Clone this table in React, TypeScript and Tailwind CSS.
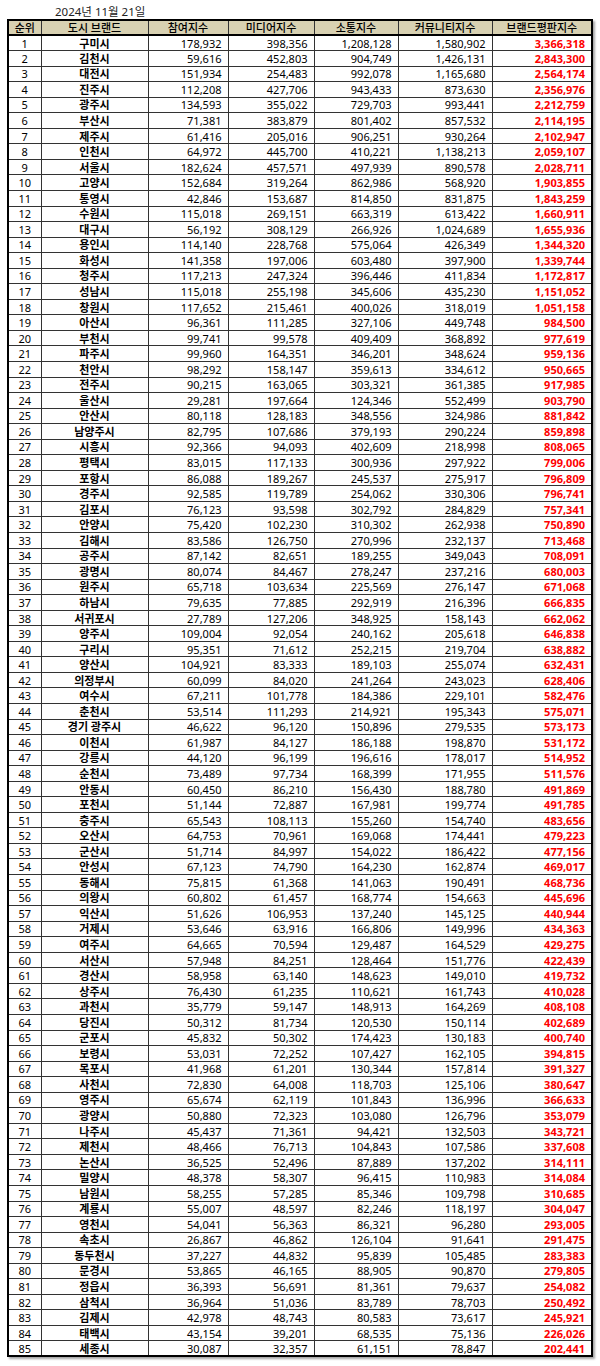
type Row = [string, number, number, number, number, number];

const rows: Row[] = [
  ["구미시", 178932, 398356, 1208128, 1580902, 3366318],
  ["김천시", 59616, 452803, 904749, 1426131, 2843300],
  ["대전시", 151934, 254483, 992078, 1165680, 2564174],
  ["진주시", 112208, 427706, 943433, 873630, 2356976],
  ["광주시", 134593, 355022, 729703, 993441, 2212759],
  ["부산시", 71381, 383879, 801402, 857532, 2114195],
  ["제주시", 61416, 205016, 906251, 930264, 2102947],
  ["인천시", 64972, 445700, 410221, 1138213, 2059107],
  ["서울시", 182624, 457571, 497939, 890578, 2028711],
  ["고양시", 152684, 319264, 862986, 568920, 1903855],
  ["통영시", 42846, 153687, 814850, 831875, 1843259],
  ["수원시", 115018, 269151, 663319, 613422, 1660911],
  ["대구시", 56192, 308129, 266926, 1024689, 1655936],
  ["용인시", 114140, 228768, 575064, 426349, 1344320],
  ["화성시", 141358, 197006, 603480, 397900, 1339744],
  ["청주시", 117213, 247324, 396446, 411834, 1172817],
  ["성남시", 115018, 255198, 345606, 435230, 1151052],
  ["창원시", 117652, 215461, 400026, 318019, 1051158],
  ["아산시", 96361, 111285, 327106, 449748, 984500],
  ["부천시", 99741, 99578, 409409, 368892, 977619],
  ["파주시", 99960, 164351, 346201, 348624, 959136],
  ["천안시", 98292, 158147, 359613, 334612, 950665],
  ["전주시", 90215, 163065, 303321, 361385, 917985],
  ["울산시", 29281, 197664, 124346, 552499, 903790],
  ["안산시", 80118, 128183, 348556, 324986, 881842],
  ["남양주시", 82795, 107686, 379193, 290224, 859898],
  ["시흥시", 92366, 94093, 402609, 218998, 808065],
  ["평택시", 83015, 117133, 300936, 297922, 799006],
  ["포항시", 86088, 189267, 245537, 275917, 796809],
  ["경주시", 92585, 119789, 254062, 330306, 796741],
  ["김포시", 76123, 93598, 302792, 284829, 757341],
  ["안양시", 75420, 102230, 310302, 262938, 750890],
  ["김해시", 83586, 126750, 270996, 232137, 713468],
  ["공주시", 87142, 82651, 189255, 349043, 708091],
  ["광명시", 80074, 84467, 278247, 237216, 680003],
  ["원주시", 65718, 103634, 225569, 276147, 671068],
  ["하남시", 79635, 77885, 292919, 216396, 666835],
  ["서귀포시", 27789, 127206, 348925, 158143, 662062],
  ["양주시", 109004, 92054, 240162, 205618, 646838],
  ["구리시", 95351, 71612, 252215, 219704, 638882],
  ["양산시", 104921, 83333, 189103, 255074, 632431],
  ["의정부시", 60099, 84020, 241264, 243023, 628406],
  ["여수시", 67211, 101778, 184386, 229101, 582476],
  ["춘천시", 53514, 111293, 214921, 195343, 575071],
  ["경기 광주시", 46622, 96120, 150896, 279535, 573173],
  ["이천시", 61987, 84127, 186188, 198870, 531172],
  ["강릉시", 44120, 96199, 196616, 178017, 514952],
  ["순천시", 73489, 97734, 168399, 171955, 511576],
  ["안동시", 60450, 86210, 156430, 188780, 491869],
  ["포천시", 51144, 72887, 167981, 199774, 491785],
  ["충주시", 65543, 108113, 155260, 154740, 483656],
  ["오산시", 64753, 70961, 169068, 174441, 479223],
  ["군산시", 51714, 84997, 154022, 186422, 477156],
  ["안성시", 67123, 74790, 164230, 162874, 469017],
  ["동해시", 75815, 61368, 141063, 190491, 468736],
  ["의왕시", 60802, 61457, 168774, 154663, 445696],
  ["익산시", 51626, 106953, 137240, 145125, 440944],
  ["거제시", 53646, 63916, 166806, 149996, 434363],
  ["여주시", 64665, 70594, 129487, 164529, 429275],
  ["서산시", 57948, 84251, 128464, 151776, 422439],
  ["경산시", 58958, 63140, 148623, 149010, 419732],
  ["상주시", 76430, 61235, 110621, 161743, 410028],
  ["과천시", 35779, 59147, 148913, 164269, 408108],
  ["당진시", 50312, 81734, 120530, 150114, 402689],
  ["군포시", 45832, 50302, 174423, 130183, 400740],
  ["보령시", 53031, 72252, 107427, 162105, 394815],
  ["목포시", 41968, 61201, 130344, 157814, 391327],
  ["사천시", 72830, 64008, 118703, 125106, 380647],
  ["영주시", 65674, 62119, 101843, 136996, 366633],
  ["광양시", 50880, 72323, 103080, 126796, 353079],
  ["나주시", 45437, 71361, 94421, 132503, 343721],
  ["제천시", 48466, 76713, 104843, 107586, 337608],
  ["논산시", 36525, 52496, 87889, 137202, 314111],
  ["밀양시", 48378, 58307, 96415, 110983, 314084],
  ["남원시", 58255, 57285, 85346, 109798, 310685],
  ["계룡시", 55007, 48597, 82246, 118197, 304047],
  ["영천시", 54041, 56363, 86321, 96280, 293005],
  ["속초시", 26867, 46862, 126104, 91641, 291475],
  ["동두천시", 37227, 44832, 95839, 105485, 283383],
  ["문경시", 53865, 46165, 88905, 90870, 279805],
  ["정읍시", 36393, 56691, 81361, 79637, 254082],
  ["삼척시", 36964, 51036, 83789, 78703, 250492],
  ["김제시", 42978, 48743, 80583, 73617, 245921],
  ["태백시", 43154, 39201, 68535, 75136, 226026],
  ["세종시", 30087, 32357, 61151, 78847, 202441],
];

const headers = ["순위", "도시 브랜드", "참여지수", "미디어지수", "소통지수", "커뮤니티지수", "브랜드평판지수"];
const widths = [33, 107, 80, 86, 84, 94, 100];

const fmt = (n: number) => n.toLocaleString("en-US");

const cell = "border border-[#333] p-0";

export default function App() {
  return (
    <div
      className="min-h-[1366px] w-[600px] bg-white text-[11px] text-black"
      style={{ fontFamily: '"Noto Sans", "Noto Sans CJK KR", sans-serif' }}
    >
      <div className="pl-[55px] pt-[4px] text-[11.5px] leading-[15px] text-[#222]">2024년 11월 21일</div>
      <table className="ml-[7px] w-[584px] table-fixed border-collapse border-2 border-black shadow-[2px_2px_2px_rgba(0,0,0,0.35)]">
        <colgroup>
          {widths.map((w, i) => (
            <col key={i} style={{ width: w }} />
          ))}
        </colgroup>
        <thead>
          <tr className="h-[15px] bg-[#d8d1b2] leading-[13px]">
            {headers.map((h) => (
              <th key={h} className={`${cell} border-b-2 border-b-black text-center font-medium`}>
                {h}
              </th>
            ))}
          </tr>
        </thead>
        <tbody>
          {rows.map((r, i) => (
            <tr key={r[0]} className="h-[15.56px] leading-[13px]">
              <td className={`${cell} text-center`}>{i + 1}</td>
              <td className={`${cell} text-center font-bold`}>{r[0]}</td>
              <td className={`${cell} pr-[6px] text-right`}>{fmt(r[1])}</td>
              <td className={`${cell} pr-[6px] text-right`}>{fmt(r[2])}</td>
              <td className={`${cell} pr-[6px] text-right`}>{fmt(r[3])}</td>
              <td className={`${cell} pr-[6px] text-right`}>{fmt(r[4])}</td>
              <td className={`${cell} pr-[6px] text-right font-bold text-[#ff0000]`}>{fmt(r[5])}</td>
            </tr>
          ))}
        </tbody>
      </table>
    </div>
  );
}
